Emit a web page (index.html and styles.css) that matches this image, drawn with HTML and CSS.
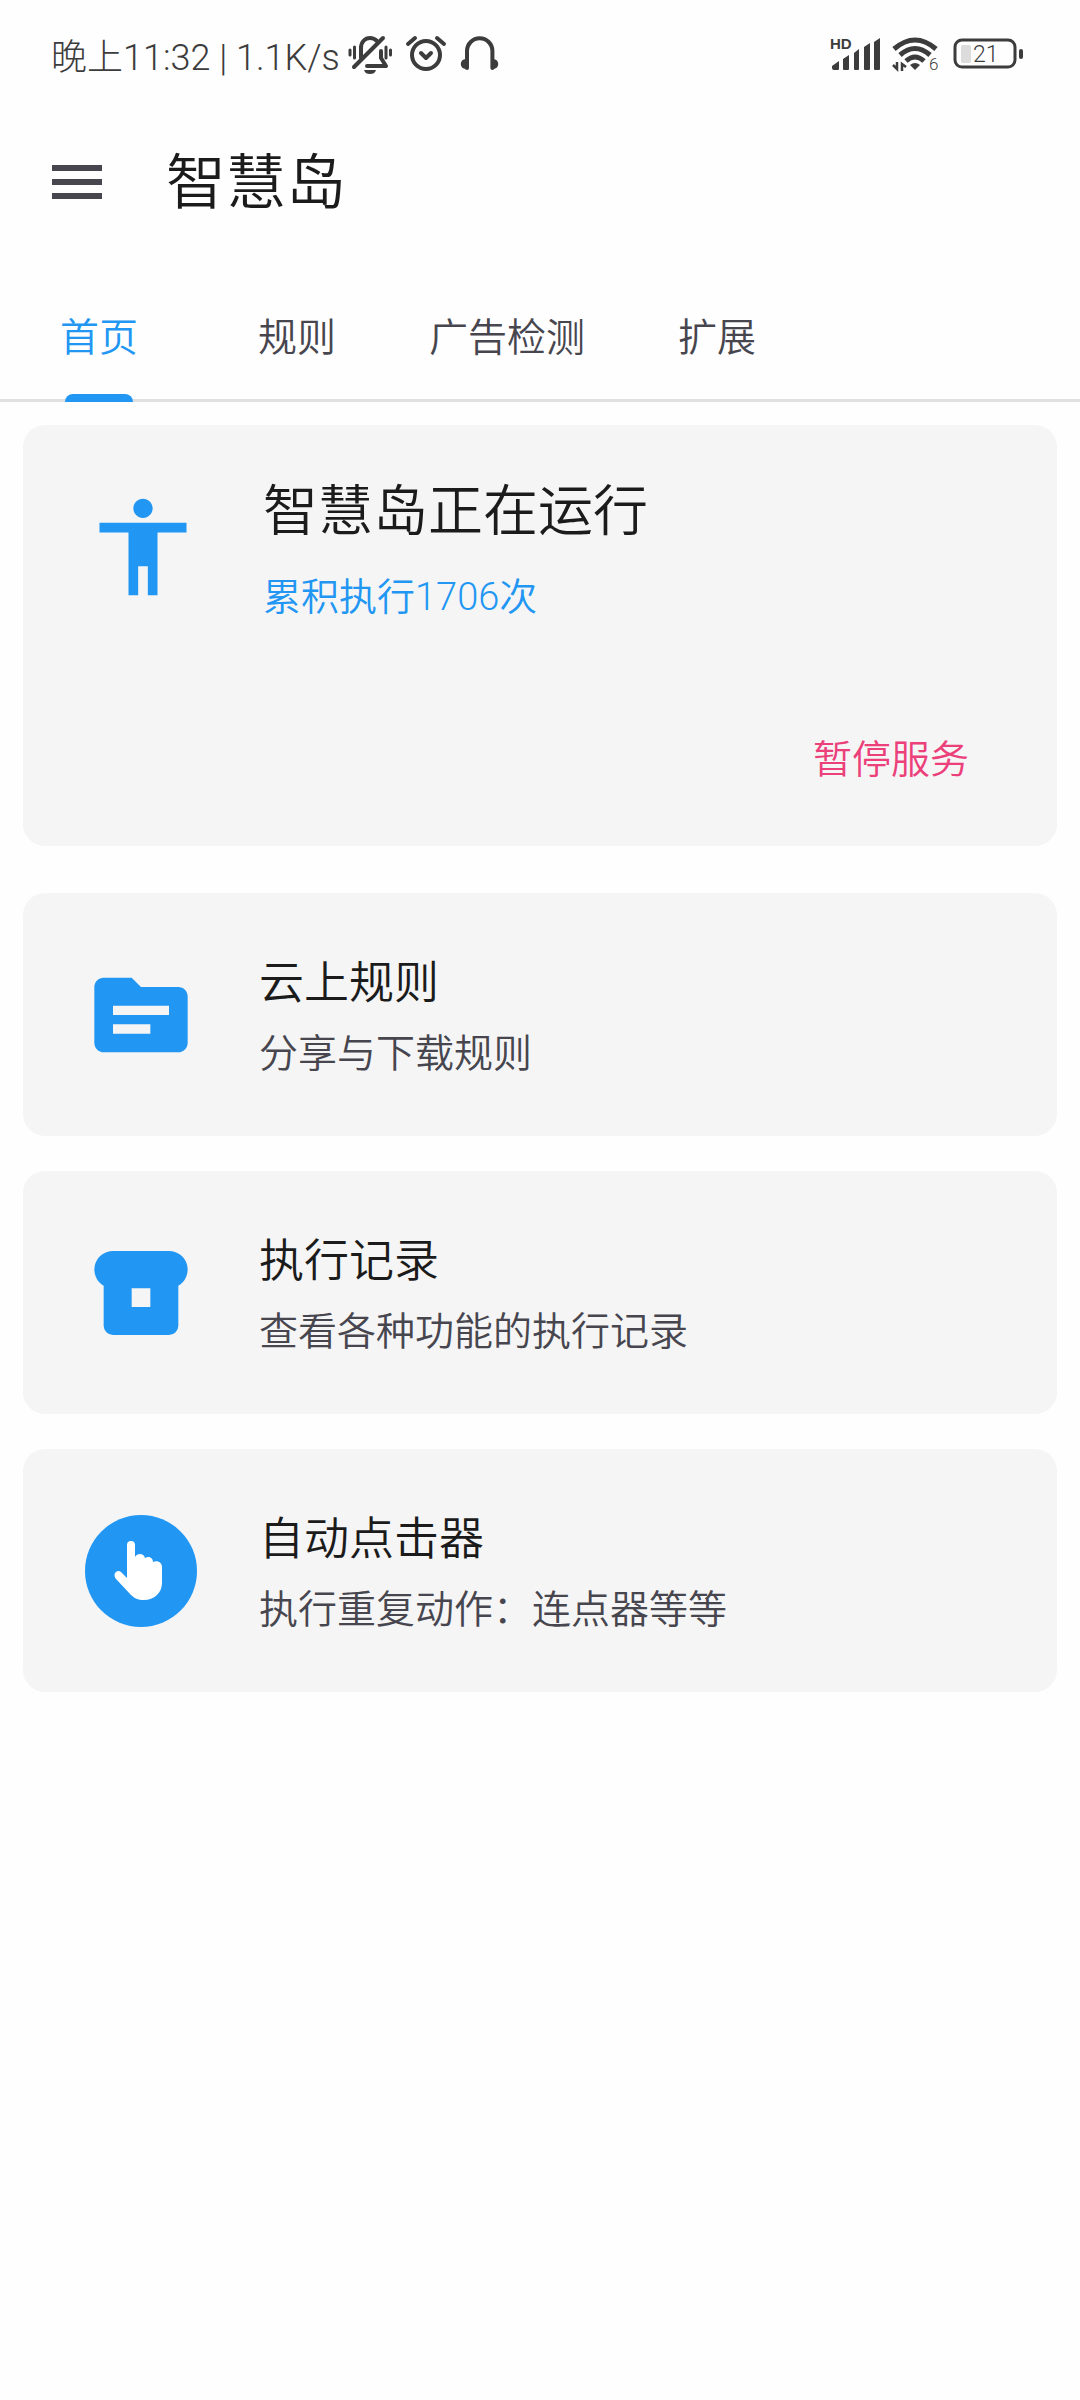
FILE: index.html
```html
<!DOCTYPE html>
<html lang="zh-CN">
<head>
    <meta charset="UTF-8">
    <meta name="viewport" content="width=device-width, initial-scale=1">
    <title>智慧岛</title>
    <link rel="stylesheet" href="styles.css">
</head>
<body>
    <!-- status bar -->
    <div class="status-bar">
        <span class="status-text">晚上11:32 | 1.1K/s</span>
        <div class="status-icons">
            <svg width="48" height="40" viewBox="0 0 48 40" fill="none" stroke="#3c3c3c" stroke-width="4" stroke-linecap="round" stroke-linejoin="round">
                <path d="M15 24V14C15 8 19 4 24 4c3 0 5 1 7 3M35 17v7l5 8H21"/>
                <path d="M37 4L8 33"/>
                <path stroke-width="3" d="M4 16v5M8.500 13v11M40 13v11M44.500 16v5"/>
                <path fill="#3c3c3c" stroke="none" d="M18 36h12c-1 3-3 4-6 4s-5-1-6-4z"/>
            </svg>
            <svg width="46" height="40" viewBox="0 0 46 40" fill="none" stroke="#3c3c3c" stroke-width="4" stroke-linecap="round" stroke-linejoin="round">
                <circle cx="23" cy="21" r="14"/>
                <path d="M5 10l7-6M34 4l7 6M18 19l5 5 5-5"/>
            </svg>
            <svg width="44" height="40" viewBox="0 0 44 40" fill="none" stroke="#3c3c3c" stroke-width="4" stroke-linecap="round">
                <path d="M9 34V17a12.700 12.700 0 0 1 25.400 0v17"/>
                <path fill="#3c3c3c" stroke="none" d="M10 25H8c-7 0-7 10 0 10h2zM33 25h2c7 0 7 10 0 10h-2z"/>
            </svg>
        </div>
        <div class="status-right">
            <svg width="52" height="40" viewBox="0 0 52 40" fill="#3c3c3c">
                <text class="hd-text" x="0" y="15">HD</text>
                <path d="M2 32l7-5v8q0 1-1 1H4q-2 0-2-2zM13 25l6-4v14q0 1-1 1h-4q-1 0-1-1zM24 19l5-4v20q0 1-1 1h-3q-1 0-1-1zM34 13l6-4v26q0 1-1 1h-4q-1 0-1-1zM44 8l6-4v31q0 1-1 1h-4q-1 0-1-1z"/>
            </svg>
            <svg width="50" height="40" viewBox="0 0 50 40" fill="none" stroke="#3c3c3c" stroke-width="5">
                <path d="M2 15Q23-3 44 15M8 21Q23 8 38 21M14 27Q23 19 32 27"/>
                <path fill="#3c3c3c" stroke="none" d="M18 31q5-4 10 0l-5 5z"/>
                <path stroke-width="2.500" d="M1 31l4 4V28M10 37v-7l4 3"/>
                <text class="wifi-text" x="37" y="36">6</text>
            </svg>
            <svg width="72" height="40" viewBox="0 0 72 40" fill="none">
                <rect x="3" y="6" width="60" height="27" rx="7" stroke="#3c3c3c" stroke-width="3"/>
                <rect x="9" y="11" width="10" height="18" rx="2" fill="#dcdcdc"/>
                <rect x="67" y="15" width="4" height="10" rx="2" fill="#3c3c3c"/>
                <text class="battery-text" x="21" y="28">21</text>
            </svg>
        </div>
    </div>

    <!-- title bar -->
    <header class="toolbar">
        <button class="menu-button" type="button" aria-label="菜单">
            <svg width="50" height="34" viewBox="0 0 50 34" fill="#47464f">
                <path d="M0 0h50v6H0zM0 14h50v6H0zM0 28h50v6H0z"/>
            </svg>
        </button>
        <h1>智慧岛</h1>
    </header>

    <nav class="tabs">
        <button class="tab active" type="button">首页</button>
        <button class="tab" type="button">规则</button>
        <button class="tab" type="button">广告检测</button>
        <button class="tab" type="button">扩展</button>
    </nav>

    <main class="content">
        <!-- service status -->
        <section class="card service-card">
            <div class="service-info">
                <svg class="icon" viewBox="0 0 24 24">
                    <path d="M12 2c1.100 0 2 .9 2 2s-.9 2-2 2-2-.9-2-2 .9-2 2-2zm9 7h-6v13h-2v-6h-2v6H9V9H3V7h18v2z"/>
                </svg>
                <div>
                    <h2 class="service-title">智慧岛正在运行</h2>
                    <p class="service-count">累积执行1706次</p>
                </div>
            </div>
            <button class="pause-button" type="button">暂停服务</button>
        </section>

        <!-- feature list -->
        <div class="feature-list">
            <a class="card feature" href="#">
                <svg class="icon" viewBox="0 0 24 24">
                    <path d="M20 6h-8l-2-2H4c-1.100 0-2 .9-2 2v12c0 1.100.9 2 2 2h16c1.100 0 2-.9 2-2V8c0-1.100-.9-2-2-2zm-6 10H6v-2h8v2zm4-4H6v-2h12v2z"/>
                </svg>
                <div class="feature-text">
                    <h3 class="feature-title">云上规则</h3>
                    <p class="feature-desc">分享与下载规则</p>
                </div>
            </a>
            <a class="card feature" href="#">
                <svg class="icon" viewBox="0 0 24 24">
                    <path fill-rule="evenodd" d="M6 3h12a4 4 0 0 1 2 7.460V19a2 2 0 0 1-2 2H6a2 2 0 0 1-2-2v-8.540A4 4 0 0 1 6 3zM10 11v4h4v-4z"/>
                </svg>
                <div class="feature-text">
                    <h3 class="feature-title">执行记录</h3>
                    <p class="feature-desc">查看各种功能的执行记录</p>
                </div>
            </a>
            <a class="card feature" href="#">
                <svg class="icon" viewBox="0 0 112 112">
                    <circle cx="56" cy="56" r="56"/>
                    <path fill="#fff" d="M42 63V30a4 4 0 0 1 8 0v12c2-4 9-4 10 1 3-2 8-1 8 4 4-2 9 0 9 5v16c0 10-8 17-18 17-6 0-10-2-13-5L31 64c-4-5 1-10 5-7z"/>
                </svg>
                <div class="feature-text">
                    <h3 class="feature-title">自动点击器</h3>
                    <p class="feature-desc">执行重复动作：连点器等等</p>
                </div>
            </a>
        </div>
    </main>
</body>
</html>
```
FILE: styles.css
```css
body {
    margin: 0;
    font-family: Roboto, 'Noto Sans CJK SC', sans-serif;
    font-weight: 350;
    background: #fefefe;
    color: #1b1b1b;
}

h1, h2, h3, p {
    margin: 0;
    font-weight: 350;
}

button {
    border: none;
    padding: 0;
    background: none;
    font: inherit;
    cursor: pointer;
}

svg {
    display: block;
    overflow: visible;
}

/* status bar */
.status-bar {
    display: flex;
    align-items: center;
    height: 80px;
    padding: 14px 56px 0 51px;
    color: #3c3c3c;
    font-weight: 300;
}

.status-text {
    font-size: 36px;
    white-space: nowrap;
}

.status-icons {
    display: flex;
    gap: 9px;
    margin-left: 6px;
}

.status-right {
    display: flex;
    gap: 10px;
    margin-left: auto;
}

.hd-text {
    font: bold 15px 'Liberation Sans', sans-serif;
}

.wifi-text {
    font-size: 17px;
    fill: #3c3c3c;
    stroke: none;
}

.battery-text {
    font-size: 23px;
    fill: #3c3c3c;
}

/* title bar */
.toolbar {
    display: flex;
    align-items: center;
    gap: 64px;
    height: 176px;
    padding: 0 52px;
}

.toolbar h1 {
    padding-top: 4px;
    font-size: 60px;
    line-height: 80px;
}

/* tabs */
.tabs {
    display: flex;
    height: 132px;
    box-shadow: inset 0 -3px #e0e0e0;
}

.tab {
    position: relative;
    min-width: 198px;
    padding: 0 33px 5px;
    font-size: 39px;
    color: #47464f;
}

.tab.active {
    color: #2196f3;
}

.tab.active::after {
    content: "";
    position: absolute;
    bottom: 0;
    left: 50%;
    width: 68px;
    height: 8px;
    margin-left: -34px;
    border-radius: 8px 8px 0 0;
    background: #2196f3;
}

/* cards */
.content {
    padding: 23px;
}

.card {
    border-radius: 22px;
    background: #f5f5f5;
}

.icon {
    flex: none;
    width: 112px;
    height: 112px;
    fill: #2196f3;
}

.service-card {
    display: flex;
    flex-direction: column;
    margin-bottom: 47px;
    padding: 46px 88px 58px 62px;
}

.service-info {
    display: flex;
    gap: 62px;
}

.service-info .icon {
    width: 116px;
    height: 116px;
    margin-top: 18px;
}

.service-title {
    font-size: 55px;
    line-height: 80px;
}

.service-count {
    margin-top: 16px;
    font-size: 38px;
    line-height: 60px;
    color: #2196f3;
}

.pause-button {
    align-self: flex-end;
    margin-top: 105px;
    font-size: 39px;
    line-height: 56px;
    color: #ec407a;
}

.feature-list {
    display: flex;
    flex-direction: column;
    gap: 35px;
}

.feature {
    display: flex;
    align-items: center;
    gap: 62px;
    padding: 46px 62px;
    color: inherit;
    text-decoration: none;
}

.feature-text {
    padding-top: 9px;
}

.feature-title {
    font-size: 45px;
    line-height: 71px;
}

.feature-desc {
    font-size: 39px;
    line-height: 71px;
    color: #47464f;
}
```
